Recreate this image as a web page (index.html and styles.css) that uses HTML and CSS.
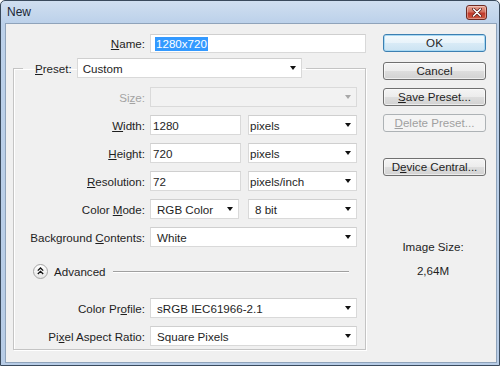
FILE: index.html
```html
<!DOCTYPE html>
<html>
<head>
<meta charset="utf-8">
<title>New</title>
<link rel="stylesheet" href="styles.css">
</head>
<body>
<div class="window">
  <div class="titlebar">
    <span class="title">New</span>
    <div class="close">
      <svg width="10" height="9" viewBox="0 0 10 9"><path d="M1.5 1 L8.5 8 M8.5 1 L1.5 8" stroke="#5a1a14" stroke-width="3" stroke-linecap="round"/><path d="M1.5 1 L8.5 8 M8.5 1 L1.5 8" stroke="#fff" stroke-width="1.6" stroke-linecap="round"/></svg>
    </div>
  </div>
  <div class="client">
    <div class="main">
      <div class="name-row">
        <span class="lbl name-lbl"><u>N</u>ame:</span>
        <div class="field name-input"><span class="hl">1280x720</span></div>
      </div>
      <fieldset class="group">
        <legend class="legend">
          <div class="legend-inner">
            <span class="lbl"><u>P</u>reset:</span>
            <div class="field select preset"><span>Custom</span><i class="arrow"></i></div>
          </div>
        </legend>
        <div class="row first">
          <span class="lbl glbl disabled">Si<u>z</u>e:</span>
          <div class="field select wide off"><span></span><i class="arrow grey"></i></div>
        </div>
        <div class="row">
          <span class="lbl glbl"><u>W</u>idth:</span>
          <div class="field num"><span>1280</span></div>
          <div class="field select unit"><span>pixels</span><i class="arrow"></i></div>
        </div>
        <div class="row">
          <span class="lbl glbl"><u>H</u>eight:</span>
          <div class="field num"><span>720</span></div>
          <div class="field select unit"><span>pixels</span><i class="arrow"></i></div>
        </div>
        <div class="row">
          <span class="lbl glbl"><u>R</u>esolution:</span>
          <div class="field num"><span>72</span></div>
          <div class="field select unit"><span>pixels/inch</span><i class="arrow"></i></div>
        </div>
        <div class="row">
          <span class="lbl glbl">Color <u>M</u>ode:</span>
          <div class="field select mode"><span>RGB Color</span><i class="arrow"></i></div>
          <div class="field select bits"><span>8 bit</span><i class="arrow"></i></div>
        </div>
        <div class="row">
          <span class="lbl glbl">Background <u>C</u>ontents:</span>
          <div class="field select wide"><span>White</span><i class="arrow"></i></div>
        </div>
        <div class="adv-row">
          <div class="adv-icon">
            <svg width="7" height="8" viewBox="0 0 7 8"><path d="M0.8 3.6 L3.5 1 L6.2 3.6 M0.8 7 L3.5 4.4 L6.2 7" fill="none" stroke="#111" stroke-width="1.3"/></svg>
          </div>
          <span class="adv-text">Advanced</span>
          <div class="adv-line"></div>
        </div>
        <div class="row profile">
          <span class="lbl glbl">Color Pr<u>o</u>file:</span>
          <div class="field select wide"><span>sRGB IEC61966-2.1</span><i class="arrow"></i></div>
        </div>
        <div class="row">
          <span class="lbl glbl">Pi<u>x</u>el Aspect Ratio:</span>
          <div class="field select wide"><span>Square Pixels</span><i class="arrow"></i></div>
        </div>
      </fieldset>
    </div>
    <div class="side">
      <button class="btn ok">OK</button>
      <button class="btn cancel">Cancel</button>
      <button class="btn save"><u>S</u>ave Preset...</button>
      <button class="btn del"><u>D</u>elete Preset...</button>
      <button class="btn device">D<u>e</u>vice Central...</button>
      <div class="imgsize">
        <div class="is-label">Image Size:</div>
        <div class="is-value">2,64M</div>
      </div>
    </div>
  </div>
</div>
</body>
</html>
```
FILE: styles.css
```css
html, body {
  margin: 0;
  padding: 0;
}
body {
  font-family: "Liberation Sans", Arial, sans-serif;
  font-size: 11.6px;
  color: #1e1e1e;
  background: #ffffff;
}
.window {
  width: 500px;
  height: 366px;
  box-sizing: border-box;
  border: 1px solid #3a4a5c;
  border-radius: 5px 5px 0 0;
  background: linear-gradient(#d0dff0 0, #bcd1ea 22px, #b7cce6 100%);
  display: flex;
  flex-direction: column;
  overflow: hidden;
}
.titlebar {
  height: 22px;
  flex: none;
  display: flex;
  align-items: center;
  justify-content: space-between;
  padding: 0 12px 0 6px;
}
.title {
  font-size: 12px;
  color: #1b2635;
}
.close {
  width: 21px;
  height: 15px;
  box-sizing: border-box;
  border: 1px solid #6e2a22;
  border-radius: 3px;
  background: linear-gradient(#e8a493 0, #d4705f 45%, #c0392b 55%, #cf5a43 100%);
  display: flex;
  align-items: center;
  justify-content: center;
  box-shadow: inset 0 0 0 1px rgba(255,255,255,0.35);
}
.client {
  flex: 1;
  margin: 0 2px 2px 4px;
  background: #f0f0f0;
  border: 1px solid #8fa3ba;
  display: flex;
}
.main {
  width: 361px;
  padding-top: 10px;
  flex: none;
}
.lbl {
  white-space: nowrap;
}
.name-row {
  display: flex;
  align-items: center;
}
.name-lbl {
  width: 139px;
  text-align: right;
  margin-right: 5px;
}
.field {
  box-sizing: border-box;
  height: 20px;
  border: 1px solid #d9d9d9;
  border-top-color: #cfcfcf;
  background: #ffffff;
  display: flex;
  align-items: center;
  white-space: nowrap;
}
.name-input {
  width: 216px;
  height: 19px;
  padding-left: 4px;
}
.hl {
  background: #3399ff;
  color: #ffffff;
  padding: 0 1px;
  line-height: 14px;
}
.group {
  margin: 5px 0 0 7px;
  width: 353px;
  box-sizing: border-box;
  padding: 0 0 3px 0;
  border: 1px solid #c4c4c4;
  box-shadow: 1px 1px 0 #ffffff, inset 1px 1px 0 #ffffff;
  min-width: 0;
}
.legend {
  margin-left: 9px;
  padding: 0 4px 0 12px;
}
.legend-inner {
  display: flex;
  align-items: center;
}
.legend-inner .lbl {
  margin-right: 5px;
}
.preset {
  width: 225px;
  padding-left: 5px;
  justify-content: space-between;
}
.select {
  justify-content: space-between;
}
.arrow {
  width: 0;
  height: 0;
  border-left: 3.5px solid transparent;
  border-right: 3.5px solid transparent;
  border-top: 4px solid #111;
  margin-right: 5px;
  flex: none;
}
.arrow.grey {
  border-top-color: #a8a8a8;
}
.row {
  display: flex;
  align-items: center;
  height: 20px;
  margin-top: 8px;
}
.row.first {
  margin-top: 9px;
}
.glbl {
  width: 131px;
  text-align: right;
  margin-right: 5px;
  flex: none;
}
.disabled {
  color: #a3a3a3;
}
.wide {
  width: 207px;
  padding-left: 6px;
}
.off {
  background: #f2f2f2;
  border-color: #dadada;
}
.num {
  width: 91px;
  padding-left: 2px;
  margin-right: 7px;
}
.unit {
  width: 109px;
  padding-left: 1px;
}
.mode {
  width: 89px;
  padding-left: 6px;
  margin-right: 9px;
}
.bits {
  width: 109px;
  padding-left: 6px;
}
.adv-row {
  display: flex;
  align-items: center;
  height: 20px;
  margin-top: 14px;
  padding-left: 19px;
}
.adv-icon {
  width: 15px;
  height: 15px;
  box-sizing: border-box;
  border: 1px solid #a5a5a5;
  border-radius: 50%;
  background: linear-gradient(#ffffff, #e6e6e6);
  display: flex;
  align-items: center;
  justify-content: center;
  flex: none;
}
.adv-text {
  margin-left: 6px;
}
.adv-line {
  flex: 1;
  height: 1px;
  background: #a0a0a0;
  box-shadow: 0 1px 0 #ffffff;
  margin: 0 16px 0 7px;
}
.row.profile {
  margin-top: 17px;
}
.side {
  flex: 1;
  padding: 10px 0 0 16px;
  display: flex;
  flex-direction: column;
  align-items: flex-start;
}
.btn {
  box-sizing: border-box;
  width: 103px;
  height: 18px;
  border: 1px solid #707070;
  border-radius: 3px;
  background: linear-gradient(#f4f4f4 0, #ececec 50%, #dedede 50%, #d2d2d2 100%);
  box-shadow: inset 0 0 0 1px rgba(255,255,255,0.6);
  font-family: inherit;
  font-size: 11.6px;
  color: #1e1e1e;
  padding: 0;
  margin: 0;
  line-height: 16px;
  text-align: center;
}
.ok {
  border-color: #3c7fb1;
  background: linear-gradient(#f4fafd 0, #e8f3fa 50%, #d9ebf6 50%, #cbe3f2 100%);
  box-shadow: inset 0 0 0 1px #a9d9f3;
}
.cancel {
  margin-top: 10px;
}
.save {
  margin-top: 8px;
}
.del {
  margin-top: 8px;
  border-color: #adb2b5;
  background: #f4f4f4;
  color: #a0a0a0;
  box-shadow: none;
}
.device {
  margin-top: 26px;
}
.imgsize {
  margin-top: 64px;
  width: 100px;
  text-align: center;
  line-height: 14px;
}
.is-value {
  margin-top: 10px;
}
```
